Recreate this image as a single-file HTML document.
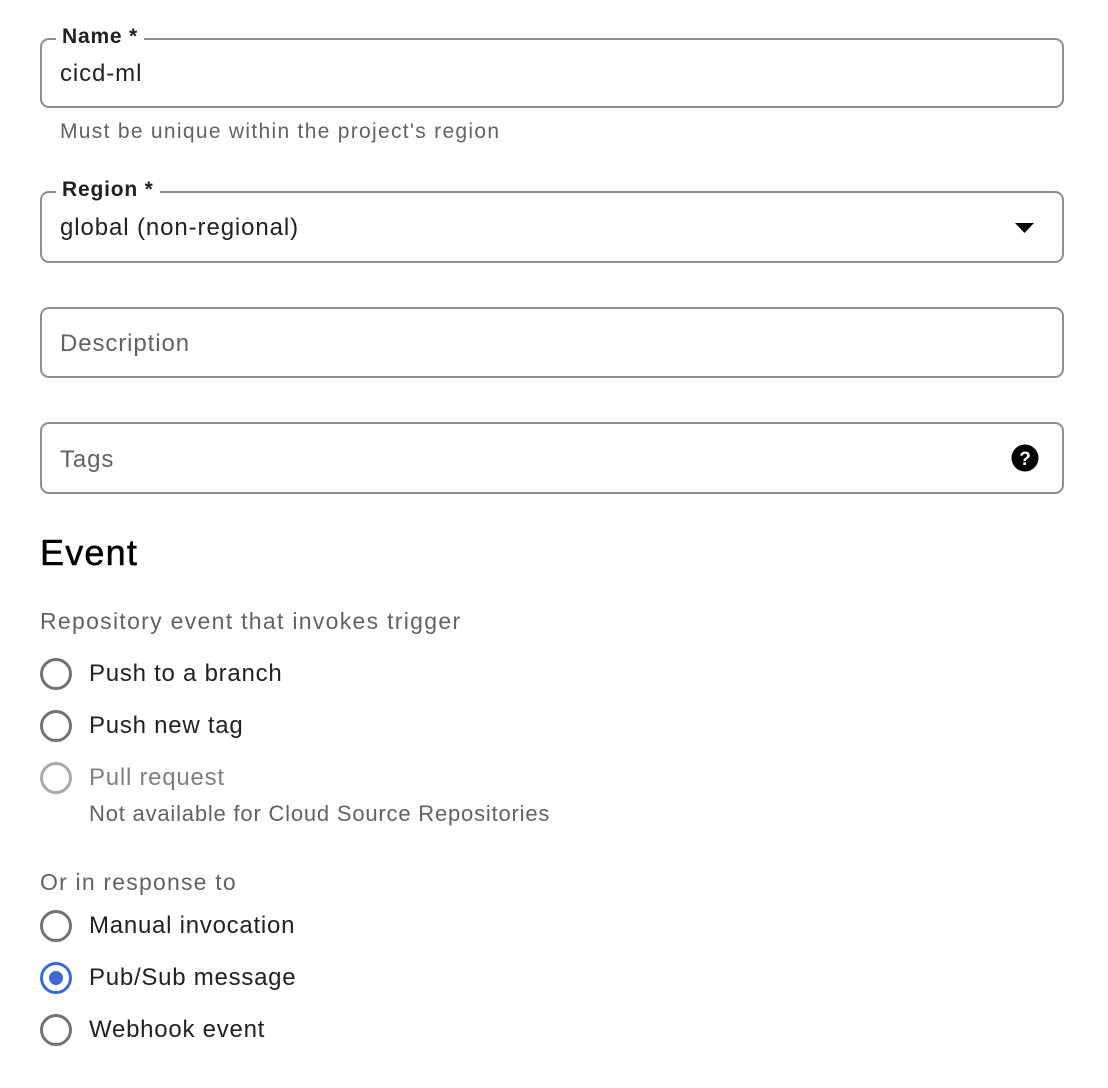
<!DOCTYPE html>
<html><head><style>
body{margin:0;width:1108px;height:1088px;background:#fff;font-family:"Liberation Sans",Arial,sans-serif;position:relative;overflow:hidden;color:#202124}
.box{position:absolute;left:40px;border:2px solid #8a8d91;border-radius:9px;box-sizing:border-box;width:1024px}
.lbl{position:absolute;left:14px;top:-16px;background:#fff;padding:0 6px;font-size:21px;font-weight:bold;color:#202124;line-height:26px;letter-spacing:0.8px}
.val{position:absolute;left:18px;font-size:24px;line-height:30px;letter-spacing:0.9px}
.ph{color:#5f6368}
.t{position:absolute;white-space:nowrap}
.r{position:absolute;left:40px;width:32px;height:32px;box-sizing:border-box;border:3px solid #6f7276;border-radius:50%}
.rt{position:absolute;left:89px;font-size:24px;line-height:30px;white-space:nowrap;letter-spacing:0.75px}
</style></head><body>
<div class="box" style="top:38px;height:70px"><div class="lbl">Name *</div><div class="val" style="top:19px">cicd-ml</div></div>
<div class="t" style="left:60px;top:119px;font-size:21px;color:#5f6368;line-height:26px;letter-spacing:1.3px">Must be unique within the project's region</div>
<div class="box" style="top:191px;height:72px"><div class="lbl">Region *</div><div class="val" style="top:20px">global (non-regional)</div>
<svg style="position:absolute;left:973px;top:30px" width="20" height="11"><path d="M0 0H19L9.5 10Z" fill="#000"/></svg></div>
<div class="box" style="top:307px;height:71px"><div class="val ph" style="top:20px">Description</div></div>
<div class="box" style="top:422px;height:72px"><div class="val ph" style="top:21px">Tags</div>
<svg style="position:absolute;left:969px;top:20px" width="28" height="28" viewBox="0 0 28 28"><circle cx="14" cy="14" r="13.5" fill="#000"/><text x="14" y="21" text-anchor="middle" font-family="Liberation Sans" font-weight="bold" font-size="19" fill="#fff">?</text></svg></div>
<div class="t" style="left:40px;top:532px;font-size:36px;font-weight:500;line-height:42px;color:#000;letter-spacing:1.2px;-webkit-text-stroke:0.5px #000">Event</div>
<div class="t" style="left:40px;top:607px;font-size:23px;color:#5f6368;line-height:28px;letter-spacing:1.3px">Repository event that invokes trigger</div>
<div class="r" style="top:658px"></div><div class="rt" style="top:659px">Push to a branch</div>
<div class="r" style="top:710px"></div><div class="rt" style="top:711px">Push new tag</div>
<div class="r" style="top:762px;border-color:#a8aaad"></div><div class="rt" style="top:763px;color:#7d7f82">Pull request</div>
<div class="t" style="left:89px;top:800px;font-size:22px;color:#5f6368;line-height:28px;letter-spacing:0.8px">Not available for Cloud Source Repositories</div>
<div class="t" style="left:40px;top:868px;font-size:23px;color:#5f6368;line-height:28px;letter-spacing:1.2px">Or in response to</div>
<div class="r" style="top:910px"></div><div class="rt" style="top:911px">Manual invocation</div>
<div class="r" style="top:962px;border-color:#3c6bd4"><div style="position:absolute;left:6px;top:6px;width:14px;height:14px;border-radius:50%;background:#3c6bd4"></div></div><div class="rt" style="top:963px">Pub/Sub message</div>
<div class="r" style="top:1014px"></div><div class="rt" style="top:1015px">Webhook event</div>
</body></html>
